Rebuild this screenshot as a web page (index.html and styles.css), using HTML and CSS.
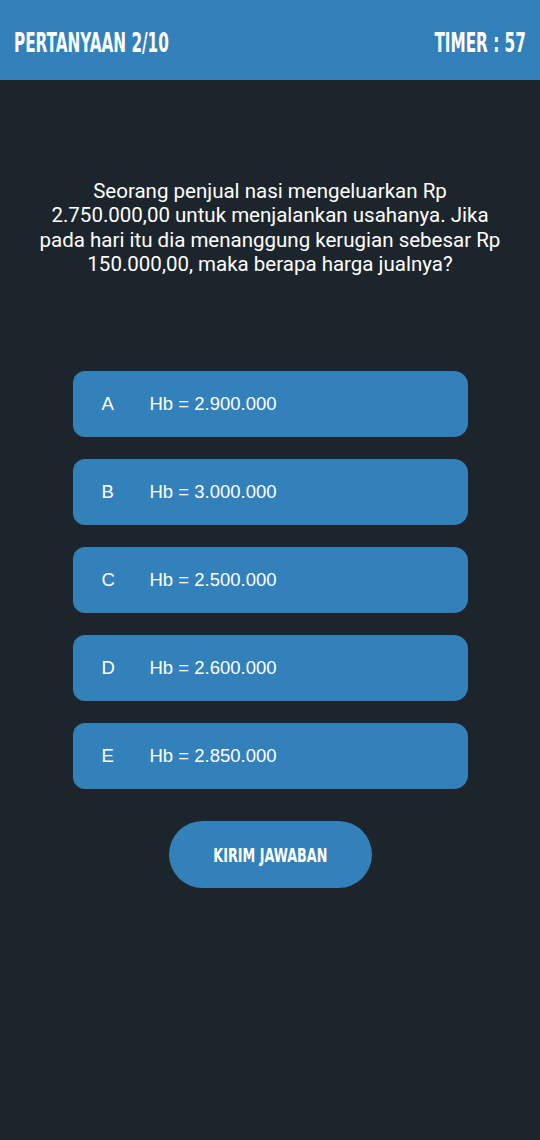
FILE: index.html
```html
<!DOCTYPE html>
<html lang="id">
<head>
<meta charset="utf-8">
<title>Kuis</title>
<link rel="stylesheet" href="styles.css">
</head>
<body>
<header class="topbar">
  <span class="topbar-title title-left">PERTANYAAN 2/10</span>
  <span class="topbar-title title-right">TIMER : 57</span>
</header>
<main class="quiz">
  <p class="question">Seorang penjual nasi mengeluarkan Rp 2.750.000,00 untuk menjalankan usahanya. Jika pada hari itu dia menanggung kerugian sebesar Rp 150.000,00, maka berapa harga jualnya?</p>
  <ul class="options">
    <li class="option"><span class="option-key">A</span><span class="option-text">Hb = 2.900.000</span></li>
    <li class="option"><span class="option-key">B</span><span class="option-text">Hb = 3.000.000</span></li>
    <li class="option"><span class="option-key">C</span><span class="option-text">Hb = 2.500.000</span></li>
    <li class="option"><span class="option-key">D</span><span class="option-text">Hb = 2.600.000</span></li>
    <li class="option"><span class="option-key">E</span><span class="option-text">Hb = 2.850.000</span></li>
  </ul>
  <button class="submit"><span class="submit-label">KIRIM JAWABAN</span></button>
</main>
</body>
</html>
```

FILE: styles.css
```css
html, body {
  margin: 0;
  padding: 0;
}
body {
  background: #1d252c;
  width: 540px;
  min-height: 1140px;
  font-family: Roboto, "Liberation Sans", sans-serif;
  color: #ffffff;
}
.topbar {
  height: 80px;
  background: #3281bb;
  display: flex;
  align-items: center;
  justify-content: space-between;
  padding: 0 14px 0 14px;
  box-sizing: border-box;
}
.topbar-title {
  font-family: "DejaVu Sans Condensed", sans-serif;
  font-weight: bold;
  font-size: 26.5px;
  display: inline-block;
  transform: scaleX(0.64);
  margin-top: 4px;
}
.title-left { transform-origin: left center; }
.title-right { transform-origin: right center; }
.quiz {
  display: flex;
  flex-direction: column;
  align-items: center;
}
.question {
  margin: 99px 0 0 0;
  width: 464px;
  text-align: center;
  font-size: 20.5px;
  line-height: 24.3px;
  font-weight: 400;
  height: 97px;
}
.options {
  list-style: none;
  margin: 95px 0 0 0;
  padding: 0;
  display: flex;
  flex-direction: column;
  gap: 22px;
}
.option {
  width: 395px;
  height: 66px;
  background: #3281bb;
  border-radius: 12px 14px 14px 12px;
  display: flex;
  align-items: center;
  padding-left: 29px;
  box-sizing: border-box;
  font-family: "Liberation Sans", Arial, sans-serif;
  font-size: 18.5px;
}
.option-key {
  width: 48px;
}
.submit {
  margin-top: 32px;
  width: 203px;
  height: 67px;
  border: none;
  border-radius: 34px;
  background: #3281bb;
  color: #ffffff;
  padding: 0;
}
.submit-label {
  display: inline-block;
  font-family: "DejaVu Sans Condensed", sans-serif;
  font-weight: bold;
  font-size: 20px;
  transform: scaleX(0.71);
}
```
